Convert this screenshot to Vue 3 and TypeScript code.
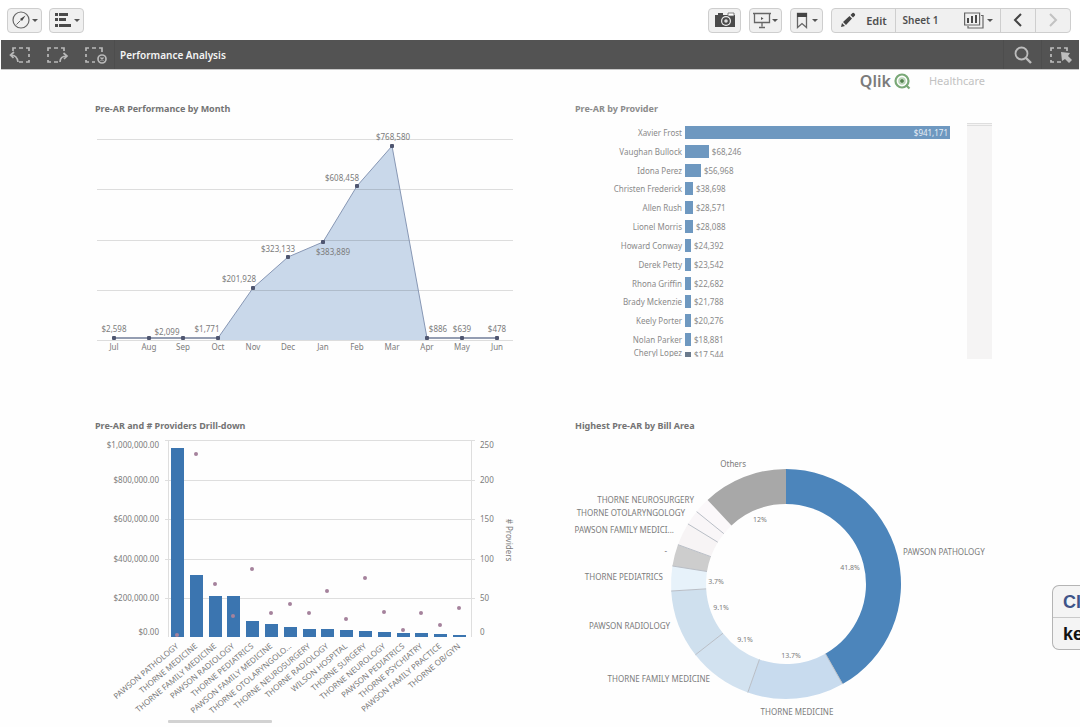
<script setup lang="ts">
interface Point { label: string; x: number; y: number; value: string; lx: number; ly: number }
interface Provider { name: string; share: number; value: string; inside?: boolean }
interface Area { name: string; top: number; dot: number }
interface Slice { from: number; to: number; color: string }

const points: Point[] = [
  { label: 'Jul', x: 19, y: 220, value: '$2,598', lx: 19, ly: 214 },
  { label: 'Aug', x: 54, y: 220, value: '', lx: 0, ly: 0 },
  { label: 'Sep', x: 88, y: 220, value: '$2,099', lx: 72, ly: 217 },
  { label: 'Oct', x: 123, y: 220, value: '$1,771', lx: 112, ly: 214 },
  { label: 'Nov', x: 158, y: 170, value: '$201,928', lx: 144, ly: 164 },
  { label: 'Dec', x: 193, y: 139, value: '$323,133', lx: 183, ly: 134 },
  { label: 'Jan', x: 228, y: 124, value: '$383,889', lx: 238, ly: 137 },
  { label: 'Feb', x: 262, y: 68, value: '$608,458', lx: 247, ly: 63 },
  { label: 'Mar', x: 297, y: 28, value: '$768,580', lx: 298, ly: 22 },
  { label: 'Apr', x: 332, y: 220, value: '$886', lx: 343, ly: 214 },
  { label: 'May', x: 367, y: 220, value: '$639', lx: 367, ly: 214 },
  { label: 'Jun', x: 402, y: 220, value: '$478', lx: 402, ly: 214 },
]
const linePath = points.map(p => `${p.x},${p.y}`).join(' ')
const areaPath = `123,222 ${points.slice(3, 10).map(p => `${p.x},${p.y}`).join(' ')} 333,222`
const monthGrid = [21, 71, 122, 172, 222]

const providers: Provider[] = [
  { name: 'Xavier Frost', share: 100, value: '$941,171', inside: true },
  { name: 'Vaughan Bullock', share: 9, value: '$68,246' },
  { name: 'Idona Perez', share: 6, value: '$56,968' },
  { name: 'Christen Frederick', share: 3, value: '$38,698' },
  { name: 'Allen Rush', share: 3, value: '$28,571' },
  { name: 'Lionel Morris', share: 3, value: '$28,088' },
  { name: 'Howard Conway', share: 2, value: '$24,392' },
  { name: 'Derek Petty', share: 2, value: '$23,542' },
  { name: 'Rhona Griffin', share: 2, value: '$22,682' },
  { name: 'Brady Mckenzie', share: 2, value: '$21,788' },
  { name: 'Keely Porter', share: 2, value: '$20,276' },
  { name: 'Nolan Parker', share: 2, value: '$18,881' },
  { name: 'Cheryl Lopez', share: 2, value: '$17,544' },
]

const areas: Area[] = [
  { name: 'PAWSON PATHOLOGY', top: 13, dot: 200 },
  { name: 'THORNE MEDICINE', top: 140, dot: 19 },
  { name: 'THORNE FAMILY MEDICINE', top: 161, dot: 149 },
  { name: 'PAWSON RADIOLOGY', top: 161, dot: 181 },
  { name: 'THORNE PEDIATRICS', top: 186, dot: 134 },
  { name: 'PAWSON FAMILY MEDICINE', top: 189, dot: 178 },
  { name: 'THORNE OTOLARYNGOLO...', top: 192, dot: 169 },
  { name: 'THORNE NEUROSURGERY', top: 194, dot: 178 },
  { name: 'THORNE RADIOLOGY', top: 194, dot: 156 },
  { name: 'WILSON HOSPITAL', top: 195, dot: 184 },
  { name: 'THORNE SURGERY', top: 196, dot: 143 },
  { name: 'THORNE NEUROLOGY', top: 197, dot: 177 },
  { name: 'PAWSON PEDIATRICS', top: 198, dot: 195 },
  { name: 'THORNE PSYCHIATRY', top: 198, dot: 178 },
  { name: 'PAWSON FAMILY PRACTICE', top: 199, dot: 190 },
  { name: 'THORNE OB/GYN', top: 200, dot: 173 },
]
const barCenter = (i: number): number => Math.round(82 + (i * 282) / 15)
const amountTicks = [
  { y: 13, left: '$1,000,000.00', right: '250' },
  { y: 48, left: '$800,000.00', right: '200' },
  { y: 87, left: '$600,000.00', right: '150' },
  { y: 127, left: '$400,000.00', right: '100' },
  { y: 166, left: '$200,000.00', right: '50' },
  { y: 200, left: '$0.00', right: '0' },
]
const amountGrid = [5, 45, 84, 124, 163]

const slices: Slice[] = [
  { from: 0, to: 150.5, color: '#4c85bb' },
  { from: 150.5, to: 199.4, color: '#c8dbee' },
  { from: 199.4, to: 232, color: '#d2e2f0' },
  { from: 232, to: 266.5, color: '#cfe0ee' },
  { from: 266.5, to: 279, color: '#e7f2fa' },
  { from: 279, to: 290, color: '#cdcdcd' },
  { from: 290, to: 301.5, color: '#f7f4f5' },
  { from: 301.5, to: 309, color: '#f9f6f8' },
  { from: 309, to: 317, color: '#fbf8fa' },
  { from: 317, to: 360, color: '#a8a8a8' },
]
const cx = 211
const cy = 149
function polar(r: number, deg: number): string {
  const a = (deg * Math.PI) / 180
  return `${(cx + r * Math.sin(a)).toFixed(2)} ${(cy - r * Math.cos(a)).toFixed(2)}`
}
function ring(s: Slice): string {
  const large = s.to - s.from > 180 ? 1 : 0
  return `M${polar(115, s.from)}A115 115 0 ${large} 1 ${polar(115, s.to)}L${polar(80, s.to)}A80 80 0 ${large} 0 ${polar(80, s.from)}Z`
}
function edge(deg: number): string {
  return `M${polar(80, deg)}L${polar(115, deg)}`
}
const edges = [150.5, 199.4, 232, 266.5, 279, 290, 301.5, 309]
const sliceLabels = [
  { text: 'Others', x: 171, y: 32, anchor: 'end' },
  { text: 'THORNE NEUROSURGERY', x: 119, y: 68, anchor: 'end' },
  { text: 'THORNE OTOLARYNGOLOGY', x: 110, y: 81, anchor: 'end' },
  { text: 'PAWSON FAMILY MEDICI...', x: 99, y: 98, anchor: 'end' },
  { text: '-', x: 92, y: 119, anchor: 'end' },
  { text: 'THORNE PEDIATRICS', x: 88, y: 145, anchor: 'end' },
  { text: 'PAWSON RADIOLOGY', x: 95, y: 194, anchor: 'end' },
  { text: 'THORNE FAMILY MEDICINE', x: 135, y: 247, anchor: 'end' },
  { text: 'THORNE MEDICINE', x: 222, y: 280, anchor: 'middle' },
  { text: 'PAWSON PATHOLOGY', x: 328, y: 120, anchor: 'start' },
]
const percents = [
  { text: '12%', x: 185, y: 87 },
  { text: '41.8%', x: 275, y: 135 },
  { text: '3.7%', x: 141, y: 149 },
  { text: '9.1%', x: 146, y: 175 },
  { text: '9.1%', x: 170, y: 207 },
  { text: '13.7%', x: 216, y: 223 },
]
</script>

<template>
  <div class="app">
    <header class="toolbar">
      <div class="tools">
        <button class="btn menu" aria-label="Navigation">
          <svg width="18" height="18" viewBox="0 0 18 18" fill="none" stroke="#666"><circle cx="9" cy="9" r="8" stroke-width="1.2" /><path d="M13.5 4.5 10 10 8 8Z" fill="#444" stroke="none" /><path d="M4.5 13.5 8.5 9.5" /></svg>
          <i class="caret"></i>
        </button>
        <button class="btn menu" aria-label="Menu">
          <svg width="18" height="16" viewBox="0 0 18 16" fill="#4a4a4a"><path d="M1 1h3v3H1zM1 6h3v3H1zM1 12h3v3H1zM5 1h9v3H5zM5 6h7v3H5zM5 12h12v3H5z" /></svg>
          <i class="caret"></i>
        </button>
      </div>
      <div class="tools right">
        <button class="btn" aria-label="Snapshot">
          <svg width="20" height="16" viewBox="0 0 20 16"><path d="M0 3h3V1h5v2h12v12H0z" fill="#4a4a4a" /><path d="M13 1h6v3h-6z" fill="#fff" stroke="#666" stroke-width=".8" /><circle cx="11" cy="9" r="5" fill="#eee" /><circle cx="11" cy="9" r="3.8" fill="#4a4a4a" /><circle cx="11" cy="9" r="1.8" fill="#ddd" /></svg>
        </button>
        <button class="btn" aria-label="Stories">
          <svg width="18" height="17" viewBox="0 0 18 17" fill="none" stroke="#666" stroke-width="1.3"><path d="M0 1.5h18M1.5 1.5v9h15v-9M9 10.5v4M6 15.5h6" /><path d="M8 5 10.500 6.500 8 8z" fill="#555" stroke="none" /></svg>
          <i class="caret"></i>
        </button>
        <button class="btn" aria-label="Bookmarks">
          <svg width="12" height="17" viewBox="0 0 12 17" fill="none" stroke="#666" stroke-width="1.3"><path d="M1.500 1.500h9v14L6 11.500l-4.500 4z" /><path d="M1 1h10v4H1z" fill="#444" stroke="none" /></svg>
          <i class="caret wide"></i>
        </button>
        <div class="group">
          <button class="edit"><svg width="16" height="16" viewBox="0 0 16 16" fill="#444"><path d="M1 15l1-4 3 3zM3 10l6.500-6 2.500 2.500L6 13zM10.500 3l2-2q1-.5 2 .5t.5 2l-2 2z" /></svg><span>Edit</span></button>
          <button class="sheet"><span>Sheet 1</span><svg width="20" height="17" viewBox="0 0 20 17" fill="none" stroke="#666" stroke-width="1.200"><path d="M.6 1h15v12H.6z" /><path d="M17 3.500h2V16H4v-2" /><path d="M4 11V6M8 11V4M12 11V3" stroke="#4a4a4a" stroke-width="2" /></svg><i class="caret"></i></button>
          <button class="step" aria-label="Previous sheet"><svg width="10" height="14" viewBox="0 0 10 14" fill="none" stroke="#444" stroke-width="2"><path d="M8 1 2 7l6 6" /></svg></button>
          <button class="step" aria-label="Next sheet"><svg width="10" height="14" viewBox="0 0 10 14" fill="none" stroke="#c2c2c2" stroke-width="2"><path d="m2 1 6 6-6 6" /></svg></button>
        </div>
      </div>
    </header>

    <nav class="selections">
      <button class="dark" aria-label="Step back"><svg width="22" height="18" viewBox="0 0 22 18" fill="none" stroke="#b9b9b9" stroke-width="1.700"><path d="M4 5V2h3M10 2h4M17 2h3v3M20 8v3M20 14v2h-3M14 16h-4" /><path d="M2 9q6 0 7 7M5 6 1.500 9l3 3" /></svg></button>
      <button class="dark" aria-label="Step forward"><svg width="22" height="18" viewBox="0 0 22 18" fill="none" stroke="#b9b9b9" stroke-width="1.700"><path d="M1 5V2h3M7 2h4M14 2h3v3M1 8v3M1 14v2h3M7 16h4" /><path d="M13 16q0-6 7-6M16.500 7 20 10l-3 3" /></svg></button>
      <button class="dark" aria-label="Clear selections"><svg width="22" height="18" viewBox="0 0 22 18" fill="none" stroke="#b9b9b9" stroke-width="1.700"><path d="M1 5V2h3M7 2h4M14 2h3v4M1 8v3M1 14v2h3M7 16h3" /><circle cx="17" cy="13" r="4" /><path d="m15.500 11.500 3 3m0-3-3 3" stroke-width="1.300" /></svg></button>
      <h1 class="app-title">Performance Analysis</h1>
      <button class="dark find" aria-label="Search"><svg width="18" height="18" viewBox="0 0 18 18" fill="none" stroke="#bdbdbd" stroke-width="1.800"><circle cx="7.500" cy="7.500" r="6" /><path d="m12 12 5 5" stroke-width="2.400" /></svg></button>
      <button class="dark select" aria-label="Selections tool"><svg width="22" height="18" viewBox="0 0 22 18" fill="none" stroke="#bdbdbd" stroke-width="1.700"><path d="M1 5V2h3M7 2h4M14 2h3v3M1 8v3M1 14v2h3M7 16h4" /><path d="m11 6 9 1-2 3 4 4-3 3-4-4-3 2z" fill="#bdbdbd" stroke="none" /></svg></button>
    </nav>

    <main class="board">
      <div class="brand">
        <span class="qlik">Qlik</span>
        <svg width="17" height="17" viewBox="0 0 17 17" fill="none" stroke="#79a877" stroke-width="2.200"><circle cx="8" cy="8" r="6.500" /><circle cx="8" cy="8" r="3" stroke="#b9d4b7" stroke-width="1.500" /><circle cx="8" cy="8" r="2" fill="#54834f" stroke="none" /><path d="m12 12 3.500 3.500" /></svg>
        <span class="health">Healthcare</span>
      </div>

      <section class="card upper">
        <h2>Pre-AR Performance by Month</h2>
        <svg class="chart" viewBox="0 0 420 242" role="img" aria-label="Pre-AR Performance by Month">
          <polygon :points="areaPath" fill="#c9d8ea" />
          <path v-for="y in monthGrid" :key="y" :d="`M2 ${y}.5H418`" class="grid-line shade" />
          <polyline :points="linePath" fill="none" stroke="#8797b4" stroke-width="1" />
          <path d="M19 220h104M332 220h70" stroke="#66708a" />
          <template v-for="p in points" :key="p.label">
            <rect :x="p.x - 2" :y="p.y - 2" width="4" height="4" rx="1" fill="#4f5670" />
            <text :x="p.lx" :y="p.ly" text-anchor="middle">{{ p.value }}</text>
            <text :x="p.x" y="232" text-anchor="middle">{{ p.label }}</text>
          </template>
        </svg>
      </section>

      <section class="card upper">
        <h2 class="light">Pre-AR by Provider</h2>
        <div class="providers">
          <div class="rows">
            <div v-for="p in providers" :key="p.name" class="row">
              <span class="name">{{ p.name }}</span>
              <div class="track">
                <div class="bar" :style="{ width: p.share + '%' }"><span v-if="p.inside">{{ p.value }}</span></div>
                <span v-if="!p.inside" class="value">{{ p.value }}</span>
              </div>
            </div>
          </div>
          <div class="minimap"></div>
        </div>
      </section>

      <section class="card">
        <h2>Pre-AR and # Providers Drill-down</h2>
        <svg class="chart" viewBox="0 0 420 292" role="img" aria-label="Pre-AR and number of providers">
          <path v-for="y in amountGrid" :key="y" :d="`M70 ${y}.5H380`" class="grid-line" />
          <path d="M73.500 5v197M376.500 5v197" class="grid-line" />
          <template v-for="t in amountTicks" :key="t.y">
            <text x="64" :y="t.y" text-anchor="end">{{ t.left }}</text>
            <text x="385" :y="t.y">{{ t.right }}</text>
          </template>
          <g v-for="(a, i) in areas" :key="a.name">
            <rect :x="barCenter(i) - 6" :y="a.top" width="13" :height="202 - a.top" fill="#3b75b0" />
            <circle :cx="barCenter(i)" :cy="a.dot" r="2" fill="#a5829c" />
            <text text-anchor="end" :transform="`translate(${barCenter(i) + 2} 212) rotate(-40)`">{{ a.name }}</text>
          </g>
          <text text-anchor="middle" transform="translate(411 105) rotate(90)"># Providers</text>
          <rect x="73" y="285" width="104" height="3" rx="1" fill="#d2d2d2" />
        </svg>
      </section>

      <section class="card">
        <h2>Highest Pre-AR by Bill Area</h2>
        <svg class="chart" viewBox="0 0 420 292" role="img" aria-label="Highest Pre-AR by Bill Area">
          <path v-for="s in slices" :key="s.from" :d="ring(s)" :fill="s.color" />
          <path v-for="e in edges" :key="e" :d="edge(e)" stroke="#b9bec6" stroke-width="1" />
          <text v-for="l in sliceLabels" :key="l.text" :x="l.x" :y="l.y" :text-anchor="l.anchor">{{ l.text }}</text>
          <text v-for="(p, i) in percents" :key="i" :x="p.x" :y="p.y" text-anchor="middle" class="pct">{{ p.text }}</text>
        </svg>
      </section>
    </main>

    <aside class="callout"><div class="callout-head">Cl</div><div class="callout-body">ke</div></aside>
  </div>
</template>

<style>
body { background: #fefefe; }
</style>

<style scoped>
.app { position: relative; min-height: 100vh; overflow: hidden; font-family: "Noto Sans", "Open Sans", sans-serif; color: #707070; }
.app, .app * { box-sizing: border-box; }
button { font: inherit; color: inherit; margin: 0; padding: 0; border: 0; background: none; display: flex; align-items: center; justify-content: center; }
svg { flex: none; }
.toolbar { height: 40px; padding: 0 9px 0 7px; display: flex; align-items: center; justify-content: space-between; background: #fff; }
.tools { display: flex; gap: 7px; }
.right { gap: 8px; }
.btn, .group { height: 25px; border: 1px solid #cecece; border-radius: 4px; background: #f0f0f0; }
.btn { width: 33px; gap: 1px; }
.menu { width: 35px; gap: 2px; }
.group { display: flex; }
.group button { color: #4f4f4f; font-weight: 600; }
.group button + button { border-left: 1px solid #cecece; }
.edit { width: 63px; gap: 10px; font-size: 11px; }
.sheet { width: 105px; font-size: 10px; gap: 3px; }
.sheet span { margin-right: 23px; }
.step { width: 35px; }
.caret { width: 0; height: 0; border: 3px solid transparent; border-top: 3px solid #555; border-bottom: 0; }
.wide { margin-left: 3px; }
.selections { height: 30px; margin: 0 1px; display: flex; align-items: center; background: #535353; border-bottom: 1px solid #c8c8c8; }
.dark { width: 38px; height: 29px; }
.dark:nth-of-type(3) { border-right: 1px solid #4d4d4d; }
.app-title { flex: 1; margin: 0; padding-left: 5px; font-size: 10px; line-height: 30px; font-weight: 600; color: #f4f4f4; }
.find { border-left: 1px solid #4d4d4d; }
.select { border-left: 1px solid #4d4d4d; }
.board { position: relative; padding: 30px 85px 0 95px; display: grid; grid-template-columns: 1fr 1fr; column-gap: 60px; }
.brand { position: absolute; top: 2px; right: 95px; height: 18px; display: flex; align-items: center; gap: 3px; }
.qlik { font-size: 16px; line-height: 18px; font-weight: 600; color: #7b7b7b; }
.health { margin-left: 15px; font-size: 11px; line-height: 18px; color: #c2c2c2; }
.card { min-width: 0; }
.upper { min-height: 317px; }
h2 { margin: 0; font-size: 9px; line-height: 18px; font-weight: 700; color: #747474; white-space: nowrap; }
.light { color: #8c8c8c; }
.chart { display: block; width: 100%; height: auto; overflow: visible; }
.chart text { font-size: 8px; fill: #7c7c7c; }
.chart .pct { font-size: 7px; }
.grid-line { stroke: #dedede; fill: none; }
.shade { stroke: #000; stroke-opacity: .13; }
.providers { display: flex; justify-content: space-between; padding-top: 5px; }
.rows { flex: 1; height: 234px; display: grid; grid-template-rows: repeat(12, 1fr) 8px; overflow: hidden; font-size: 8px; color: #8a8a8a; }
.row { display: grid; grid-template-columns: 107px 1fr; column-gap: 3px; align-items: center; min-height: 0; }
.row:last-child { align-items: start; line-height: 8px; }
.name { text-align: right; white-space: nowrap; }
.track { display: flex; align-items: center; gap: 3px; min-width: 0; }
.bar { flex: none; height: 13px; min-width: 6px; background: #6e98c0; color: #e7eff6; display: flex; align-items: center; justify-content: flex-end; padding-right: 2px; }
.row:last-child .bar { height: 5px; background: #6a7a8c; }
.row:last-child .track { padding-top: 3px; height: 8px; }
.minimap { width: 25px; height: 236px; margin: 0 3px 0 17px; border-top: 3px double #dedede; background: #f5f4f4; }
.callout { position: absolute; top: 585px; right: 0; width: 28px; height: 65px; overflow: hidden; border: 1px solid #b4b4b4; border-right: 0; border-radius: 7px 0 0 7px; background: #f4f4f4; font: 700 18px/32px "Liberation Sans", Arial, sans-serif; }
.callout div { padding-left: 10px; height: 32px; }
.callout-head { color: #3f5488; border-bottom: 1px solid #c9c9c9; }
.callout-body { color: #111; }
</style>
